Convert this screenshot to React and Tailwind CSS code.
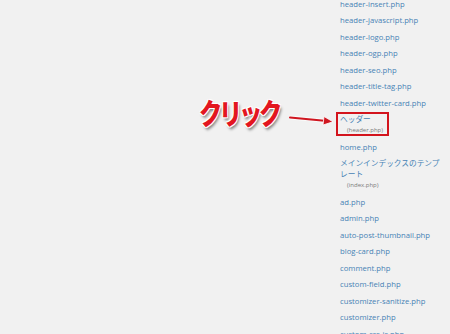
const files = [
  { name: 'header-insert.php' },
  { name: 'header-javascript.php' },
  { name: 'header-logo.php' },
  { name: 'header-ogp.php' },
  { name: 'header-seo.php' },
  { name: 'header-title-tag.php' },
  { name: 'header-twitter-card.php' },
  { name: 'ヘッダー', file: 'header.php', boxed: true },
  { name: 'home.php' },
  { name: 'メインインデックスのテンプレート', file: 'index.php' },
  { name: 'ad.php' },
  { name: 'admin.php' },
  { name: 'auto-post-thumbnail.php' },
  { name: 'blog-card.php' },
  { name: 'comment.php' },
  { name: 'custom-field.php' },
  { name: 'customizer-sanitize.php' },
  { name: 'customizer.php' },
  { name: 'custom-css-js.php' },
];

const FileItem = ({ item }) => {
  return (
    <li className="relative">
      <div className="leading-[11px] text-[#4682b5]">{item.name}</div>
      {item.file && (
        <div className="pl-[7px] leading-[11px] text-[6px] text-[#7a7a7a]">({item.file})</div>
      )}
      {item.boxed && (
        <div className="absolute -left-[4px] -top-[2px] w-[53px] h-[24px] border-2 border-[#d3141d]" />
      )}
    </li>
  );
};

const Arrow = () => (
  <svg width="46" height="12" viewBox="0 0 46 12" className="shrink-0 mt-[20px]">
    <line x1="1" y1="3.5" x2="38" y2="7" stroke="#fff" strokeWidth="4" strokeLinecap="round" opacity="0.7" />
    <line x1="1" y1="3.5" x2="38" y2="7" stroke="#cf1620" strokeWidth="2" strokeLinecap="round" />
    <path d="M35 2.5 L44 7.8 L34 11 Z" fill="#cf1620" stroke="#fff" strokeWidth="0.8" strokeLinejoin="round" />
  </svg>
);

export default function App() {
  return (
    <div
      className="flex w-[450px] h-[334px] overflow-hidden bg-[#f1f1f1]"
      style={{ fontFamily: '"Open Sans", "Noto Sans CJK JP", sans-serif' }}
    >
      <div className="w-[340px] shrink-0 pt-[94px] pl-[199px]">
        <div className="flex items-start">
          <span
            className="block w-[90px] shrink-0 whitespace-nowrap origin-left scale-x-[0.8] text-[29px] leading-[36px] font-black tracking-[-4px] text-[#e3161f] [text-shadow:1px_1px_0_#fff,-1px_-1px_0_#fff,1px_-1px_0_#fff,-1px_1px_0_#fff,2px_3px_3px_rgba(0,0,0,0.45)]"
            style={{ fontFamily: '"Noto Sans CJK JP", sans-serif' }}
          >
            クリック
          </span>
          <Arrow />
        </div>
      </div>
      <ul className="w-[104px] mt-[-1.5px] flex flex-col gap-[5.5px] text-[7.7px]">
        {files.map((item) => (
          <FileItem key={item.name} item={item} />
        ))}
      </ul>
    </div>
  );
}
